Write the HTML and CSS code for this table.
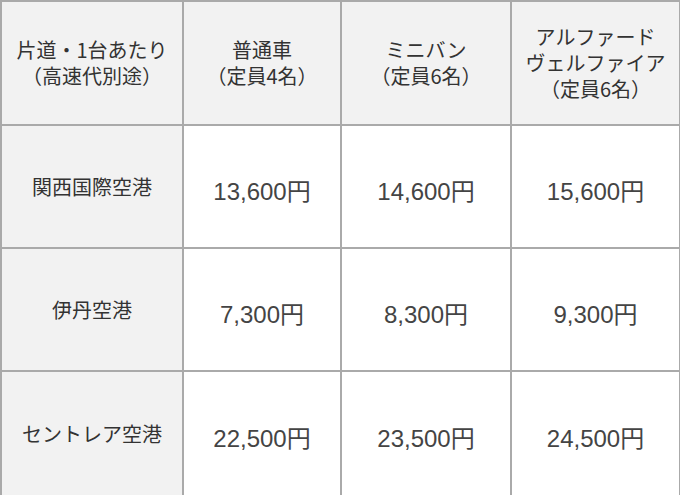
FILE: index.html
```html
<!DOCTYPE html>
<html lang="ja">
<head>
<meta charset="utf-8">
<title>料金表</title>
<link rel="stylesheet" href="styles.css">
</head>
<body>
<table class="fare">
  <colgroup>
    <col class="c1">
    <col class="c2">
    <col class="c3">
    <col class="c4">
  </colgroup>
  <thead>
    <tr>
      <th>片道・1台あたり<br>（高速代別途）</th>
      <th>普通車<br>（定員4名）</th>
      <th>ミニバン<br>（定員6名）</th>
      <th>アルファード<br>ヴェルファイア<br>（定員6名）</th>
    </tr>
  </thead>
  <tbody>
    <tr>
      <th>関西国際空港</th>
      <td>13,600円</td>
      <td>14,600円</td>
      <td>15,600円</td>
    </tr>
    <tr>
      <th>伊丹空港</th>
      <td>7,300円</td>
      <td>8,300円</td>
      <td>9,300円</td>
    </tr>
    <tr class="last">
      <th>セントレア空港</th>
      <td>22,500円</td>
      <td>23,500円</td>
      <td>24,500円</td>
    </tr>
  </tbody>
</table>
</body>
</html>
```

FILE: styles.css
```css
html, body {
  margin: 0;
  padding: 0;
  background: #ffffff;
}

.fare {
  border-collapse: collapse;
  table-layout: fixed;
  width: 679px;
  margin: 0;
}

.c1 { width: 182px; }
.c2 { width: 158px; }
.c3 { width: 170px; }
.c4 { width: 169px; }

.fare th,
.fare td {
  border: 2px solid #aaaaaa;
  height: 122px;
  padding: 0 4px;
  text-align: center;
  vertical-align: middle;
}

.fare th {
  background: #f2f2f2;
  color: #333333;
  font-family: "Noto Sans CJK JP", sans-serif;
  font-weight: normal;
  font-size: 20px;
  line-height: 26px;
}

.fare tbody th {
  height: 121px;
}

.fare td {
  background: #ffffff;
  color: #444444;
  font-family: "Liberation Sans", "Noto Sans CJK JP", sans-serif;
  font-size: 24px;
  line-height: 30px;
  height: 111px;
  padding-top: 10px;
}

.fare .last th {
  height: 124px;
}

.fare .last td {
  height: 114px;
}
```
